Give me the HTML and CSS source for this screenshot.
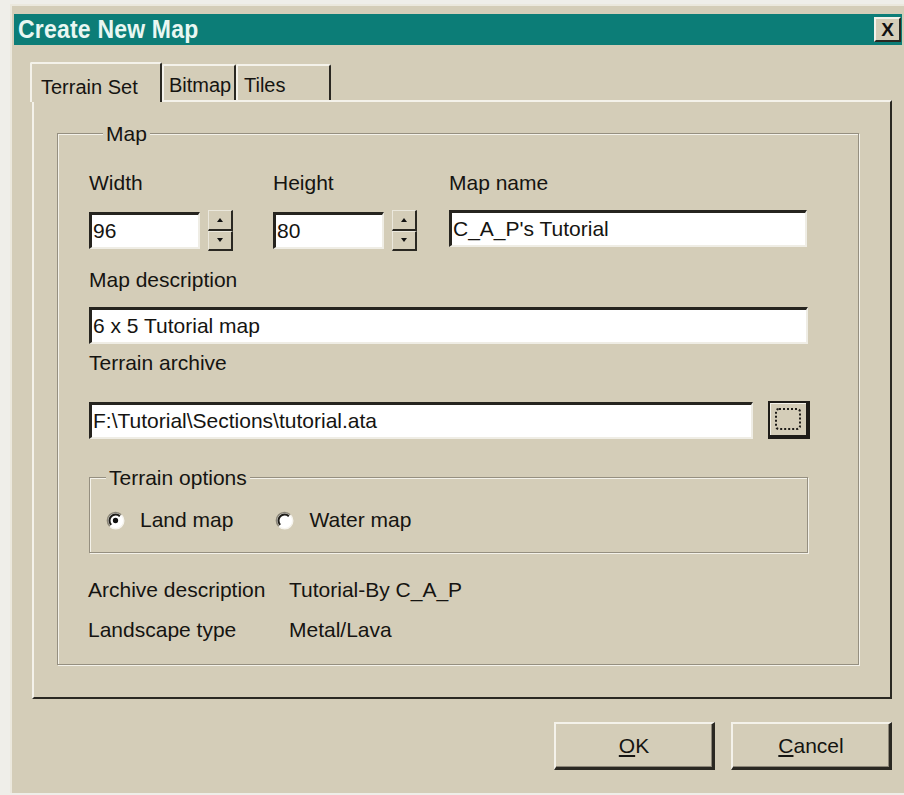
FILE: index.html
```html
<!DOCTYPE html>
<html lang="en">
<head>
<meta charset="utf-8">
<title>Create New Map</title>
<link rel="stylesheet" href="styles.css">
</head>
<body>
<div class="dialog">
  <div class="titlebar">
    <span class="title">Create New Map</span>
    <span class="close">X</span>
  </div>

  <div class="content">
    <div class="tabs">
      <div class="tab active tab-terrain">Terrain Set</div>
      <div class="tab tab-bitmap">Bitmap</div>
      <div class="tab tab-tiles">Tiles</div>
    </div>

    <div class="panel">
      <div class="group map-group">
        <div class="legend">Map</div>

        <div class="size-row">
          <div class="field field-num">
            <div class="label">Width</div>
            <div class="num-row">
              <div class="edit edit-num">96</div>
              <div class="spin"><span class="spin-btn"><i class="arrow-up"></i></span><span class="spin-btn"><i class="arrow-down"></i></span></div>
            </div>
          </div>
          <div class="field field-num">
            <div class="label">Height</div>
            <div class="num-row">
              <div class="edit edit-num">80</div>
              <div class="spin"><span class="spin-btn"><i class="arrow-up"></i></span><span class="spin-btn"><i class="arrow-down"></i></span></div>
            </div>
          </div>
          <div class="field field-name">
            <div class="label">Map name</div>
            <div class="edit">C_A_P's Tutorial</div>
          </div>
        </div>

        <div class="label label-desc">Map description</div>
        <div class="edit edit-desc">6 x 5 Tutorial map</div>

        <div class="label label-archive">Terrain archive</div>
        <div class="archive-row">
          <div class="edit edit-archive">F:\Tutorial\Sections\tutorial.ata</div>
          <div class="browse"><span class="focus-ring"></span></div>
        </div>

        <div class="group options-group">
          <div class="legend">Terrain options</div>
          <div class="radios">
            <div class="radio">
              <svg class="radio-mark" width="19" height="19" viewBox="0 0 18 18">
                <circle cx="9" cy="9" r="7.6" fill="#ffffff"/>
                <path d="M3.6 14.4 A7.6 7.6 0 0 1 14.4 3.6" fill="none" stroke="#8a8577" stroke-width="1.5"/>
                <path d="M4.9 13.1 A5.8 5.8 0 0 1 13.1 4.9" fill="none" stroke="#1e1c18" stroke-width="1.9"/>
                <path d="M14.6 3.8 A7.6 7.6 0 0 1 3.8 14.6" fill="none" stroke="#f6f4ee" stroke-width="1.4"/>
                <circle cx="9" cy="9" r="2.5" fill="#111111"/>
              </svg>
              <span>Land map</span>
            </div>
            <div class="radio radio-water">
              <svg class="radio-mark" width="19" height="19" viewBox="0 0 18 18">
                <circle cx="9" cy="9" r="7.6" fill="#ffffff"/>
                <path d="M3.6 14.4 A7.6 7.6 0 0 1 14.4 3.6" fill="none" stroke="#8a8577" stroke-width="1.5"/>
                <path d="M4.9 13.1 A5.8 5.8 0 0 1 13.1 4.9" fill="none" stroke="#1e1c18" stroke-width="1.9"/>
                <path d="M14.6 3.8 A7.6 7.6 0 0 1 3.8 14.6" fill="none" stroke="#f6f4ee" stroke-width="1.4"/>
              </svg>
              <span>Water map</span>
            </div>
          </div>
        </div>

        <div class="info">
          <span class="info-key">Archive description</span><span>Tutorial-By C_A_P</span>
          <span class="info-key">Landscape type</span><span>Metal/Lava</span>
        </div>
      </div>
    </div>

    <div class="buttons">
      <div class="button"><u>O</u>K</div>
      <div class="button"><u>C</u>ancel</div>
    </div>
  </div>
</div>
</body>
</html>
```

FILE: styles.css
```css
* { box-sizing: border-box; }

html, body {
  margin: 0;
  padding: 0;
  width: 904px;
  height: 795px;
  overflow: hidden;
  background: #efeee9;
}

body {
  font-family: "Liberation Sans", Arial, sans-serif;
  font-size: 21px;
  color: #151411;
}

/* window frame */
.dialog {
  margin: 4px 0 0 10px;
  width: 894px;
  height: 789px;
  background: #d4cdb8;
  border-left: 2px solid #ebe8dd;
  border-top: 2px solid #ebe8dd;
}

.titlebar {
  margin: 8px 2px 0 2px;
  height: 31px;
  background: #0c7d77;
  display: flex;
  align-items: center;
  justify-content: space-between;
  padding-left: 4px;
}

.title {
  color: #e9f7f2;
  font-weight: bold;
  font-size: 23px;
  letter-spacing: 0.2px;
  display: inline-block;
  transform: scaleY(1.12);
}

.close {
  width: 27px;
  height: 25px;
  margin-right: 1px;
  background: #d4cdb8;
  border-top: 2px solid #f4f2ea;
  border-left: 2px solid #f4f2ea;
  border-right: 2px solid #2a2822;
  border-bottom: 2px solid #2a2822;
  font-weight: bold;
  font-size: 19px;
  line-height: 21px;
  text-align: center;
  color: #111;
}

.content {
  padding: 17px 12px 0 20px;
}

/* tab strip */
.tabs {
  display: flex;
  height: 38px;
  margin-left: -2px;
  align-items: flex-end;
}

.tab {
  flex: none;
  height: 36px;
  padding-top: 7px;
  line-height: 24px;
  font-size: 20px;
  border-top: 2px solid #f4f2ea;
  border-left: 2px solid #f4f2ea;
  border-right: 2px solid #2a2822;
  border-radius: 2px 2px 0 0;
  white-space: nowrap;
}

.tab.active {
  height: 40px;
  margin-bottom: -2px;
  padding-top: 11px;
  background: #d4cdb8;
  position: relative;
  z-index: 1;
}

.tab-terrain { width: 132px; padding-left: 9px; }
.tab-bitmap { width: 74px; padding-left: 5px; }
.tab-tiles { width: 95px; padding-left: 6px; }

/* tab page */
.panel {
  height: 599px;
  border-top: 2px solid #f4f2ea;
  border-left: 2px solid #f4f2ea;
  border-right: 2px solid #2a2822;
  border-bottom: 2px solid #2a2822;
  padding: 31px 31px 0 23px;
}

/* etched group box */
.group {
  border: 1px solid #958f80;
  box-shadow: inset 1px 1px 0 #f4f2ea, 1px 1px 0 #f4f2ea;
}

.legend {
  width: fit-content;
  margin: -12px 0 0 14px;
  padding: 0 3px;
  background: #d4cdb8;
  line-height: 24px;
  height: 24px;
}

.label {
  line-height: 24px;
  height: 24px;
}

.map-group {
  height: 532px;
  padding: 0 0 0 31px;
}

.size-row {
  display: flex;
  margin-top: 25px;
}

.field {
  display: flex;
  flex-direction: column;
  gap: 15px;
}

.field-num { width: 144px; }
.field-num + .field-num { margin-left: 40px; }
.field-name { margin-left: 32px; width: 358px; }

.num-row {
  display: flex;
  align-items: center;
  gap: 8px;
}

/* sunken edit box */
.edit {
  height: 37px;
  background: #ffffff;
  border-top: 3px solid #26241f;
  border-left: 3px solid #26241f;
  border-right: 2px solid #efede5;
  border-bottom: 2px solid #efede5;
  padding-left: 1px;
  line-height: 31px;
  white-space: nowrap;
}

.edit-num { width: 111px; }

.spin {
  display: flex;
  flex-direction: column;
  width: 25px;
  height: 41px;
}

.spin-btn {
  flex: 1;
  display: flex;
  align-items: center;
  justify-content: center;
  border-top: 1px solid #ebe8dd;
  border-left: 1px solid #ebe8dd;
  border-right: 2px solid #2a2822;
  border-bottom: 2px solid #2a2822;
}

.arrow-up, .arrow-down {
  width: 0;
  height: 0;
  border-left: 3px solid transparent;
  border-right: 3px solid transparent;
}
.arrow-up { border-bottom: 4px solid #111; }
.arrow-down { border-top: 4px solid #111; }

.label-desc { margin-top: 17px; }
.edit-desc { margin-top: 15px; width: 719px; }

.label-archive { margin-top: 7px; }

.archive-row {
  display: flex;
  align-items: center;
  margin-top: 27px;
  gap: 15px;
}

.edit-archive { width: 664px; }

.browse {
  width: 42px;
  height: 38px;
  margin-top: -2px;
  background: #d4cdb8;
  border-top: 2px solid #1e1c18;
  border-left: 2px solid #1e1c18;
  border-right: 4px solid #1e1c18;
  border-bottom: 4px solid #1e1c18;
  box-shadow: inset 1px 1px 0 #f4f2ea;
  padding: 5px;
}

.focus-ring {
  display: block;
  width: 100%;
  height: 100%;
  border: 2px dotted #1e1c18;
  border-radius: 4px;
}

.options-group {
  width: 719px;
  margin-top: 38px;
  height: 76px;
}

.options-group .legend { margin-left: 16px; }

.radios {
  display: flex;
  margin-top: 18px;
  padding-left: 16px;
  line-height: 24px;
}

.radio {
  display: flex;
  align-items: center;
  gap: 15px;
}

.radio-water { margin-left: 42px; }

.info {
  display: grid;
  grid-template-columns: 201px auto;
  row-gap: 16px;
  line-height: 24px;
  margin-top: 25px;
  margin-left: -1px;
}

/* dialog buttons */
.buttons {
  display: flex;
  justify-content: flex-end;
  gap: 16px;
  margin-top: 23px;
}

.button {
  width: 161px;
  height: 48px;
  border-top: 2px solid #f4f2ea;
  border-left: 2px solid #f4f2ea;
  border-right: 3px solid #2a2822;
  border-bottom: 3px solid #2a2822;
  box-shadow: inset -1px -1px 0 #8c8678;
  text-align: center;
  line-height: 43px;
}

.button u { text-underline-offset: 2px; }
```
